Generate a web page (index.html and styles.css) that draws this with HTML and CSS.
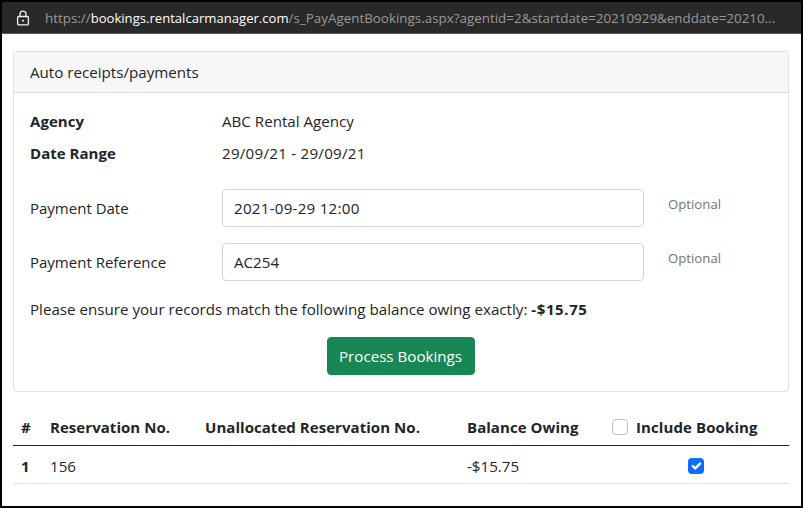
FILE: index.html
```html
<!DOCTYPE html>
<html lang="en">
<head>
<meta charset="utf-8">
<title>Auto receipts/payments</title>
<link rel="stylesheet" href="styles.css">
</head>
<body>
<div class="frame">
  <div class="urlbar">
    <svg class="lock" width="14" height="16" viewBox="0 0 14 16" aria-hidden="true">
      <path d="M4 6.5V4.2a3 3 0 0 1 6 0V6.5" fill="none" stroke="#f2f2f2" stroke-width="1.3"/>
      <rect x="1.6" y="6.5" width="10.8" height="8.4" rx="1.2" fill="none" stroke="#f2f2f2" stroke-width="1.3"/>
      <circle cx="7" cy="10.7" r="1" fill="#f2f2f2"/>
    </svg>
    <span class="url"><span class="dim">https://</span><span class="host">bookings.rentalcarmanager.com</span><span class="dim">/s_PayAgentBookings.aspx?agentid=2&amp;startdate=20210929&amp;enddate=20210...</span></span>
  </div>
  <main class="page">
    <section class="card">
      <header class="card-header">Auto receipts/payments</header>
      <div class="card-body">
        <div class="info-row"><strong class="label">Agency</strong><span>ABC Rental Agency</span></div>
        <div class="info-row"><strong class="label">Date Range</strong><span class="num">29/09/21 - 29/09/21</span></div>
        <div class="form-grid">
          <label class="field-label" for="pd">Payment Date</label>
          <input class="field num" id="pd" type="text" value="2021-09-29 12:00">
          <small class="hint">Optional</small>
          <label class="field-label" for="pr">Payment Reference</label>
          <input class="field" id="pr" type="text" value="AC254">
          <small class="hint">Optional</small>
        </div>
        <p class="notice">Please ensure your records match the following balance owing exactly: <strong class="amount">-$15.75</strong></p>
        <div class="actions"><button class="btn" type="button">Process Bookings</button></div>
      </div>
    </section>
    <table class="table">
      <colgroup>
        <col class="c1"><col class="c2"><col class="c3"><col class="c4"><col class="c5">
      </colgroup>
      <thead>
        <tr>
          <th>#</th>
          <th>Reservation No.</th>
          <th>Unallocated Reservation No.</th>
          <th>Balance Owing</th>
          <th><span class="include"><span class="check"></span>Include Booking</span></th>
        </tr>
      </thead>
      <tbody>
        <tr>
          <th>1</th>
          <td>156</td>
          <td></td>
          <td>-$15.75</td>
          <td class="center"><span class="check on"><svg width="16" height="16" viewBox="0 0 20 20" aria-hidden="true"><path d="M6 10l3 3 6-6" fill="none" stroke="#fff" stroke-width="3" stroke-linecap="round" stroke-linejoin="round"/></svg></span></td>
        </tr>
      </tbody>
    </table>
  </main>
</div>
</body>
</html>
```

FILE: styles.css
```css
* { box-sizing: border-box; }
html, body { margin: 0; height: 100%; }
body {
  font-family: "Open Sans", "Noto Sans", sans-serif;
  font-size: 15.15px;
  line-height: 24px;
  color: #212529;
  background: #000;
}
.frame {
  height: 508px;
  width: 803px;
  border: 2px solid #000;
  display: flex;
  flex-direction: column;
  background: #fff;
  overflow: hidden;
}
.urlbar {
  height: 32px;
  flex: none;
  background: #292929;
  border-bottom: 1px solid #555;
  display: flex;
  align-items: center;
  padding-left: 14px;
  gap: 15px;
  font-size: 13.4px;
  white-space: nowrap;
}
.lock { flex: none; }
.dim { color: #9a9a9a; }
.host { color: #fff; font-size: 13.1px; }
.page { padding: 17px 12px 0 11px; }
.card {
  border: 1px solid #dfdfdf;
  border-radius: 4px;
  height: 341px;
  overflow: hidden;
}
.card-header {
  height: 41px;
  padding: 8px 16px;
  background: #f7f7f7;
  border-bottom: 1px solid #dfdfdf;
}
.card-body { padding: 16px 16px 16px; }
.info-row {
  display: grid;
  grid-template-columns: 192px 1fr;
  height: 32px;
}
.label { font-weight: 700; font-size: 15px; letter-spacing: .03px; }
.num { letter-spacing: .25px; }
.amount { font-size: 15px; letter-spacing: .6px; }
.form-grid {
  display: grid;
  grid-template-columns: 192px 422px auto;
  row-gap: 16px;
  padding-top: 16px;
  align-items: center;
}
.field-label { display: block; font-size: 15px; }
.field {
  height: 38px;
  width: 422px;
  border: 1px solid #ced4da;
  border-radius: 4px;
  padding: 6px 11px;
  font-family: inherit;
  font-size: inherit;
  color: #212529;
  background: #fff;
}
.hint {
  font-size: 13.2px;
  color: #6c757d;
  padding-left: 24px;
  align-self: start;
  line-height: 30px;
}
.notice { margin: 16px 0 16px; }
.actions { display: flex; justify-content: center; padding-right: 1px; }
.btn {
  height: 38px;
  width: 148px;
  border: 1px solid #198754;
  border-radius: 4px;
  background: #198754;
  color: #fff;
  font: inherit;
  padding: 0;
}
.table {
  border-collapse: collapse;
  table-layout: fixed;
  width: 776px;
  margin-top: 14px;
}
.c1 { width: 29px; }
.c2 { width: 155px; }
.c3 { width: 262px; }
.c4 { width: 145px; }
.c5 { width: 185px; }
.table th, .table td {
  text-align: left;
  vertical-align: top;
  border-bottom: 1px solid #dee2e6;
}
.table th { font-size: 15px; font-weight: 700; letter-spacing: .05px; }
.table thead th {
  padding: 9px 8px 6px;
  border-bottom: 1px solid #212529;
}
.table tbody th, .table tbody td { padding: 8px 8px 5px; }
.table tbody .center { padding: 12px 9px 9px 8px; }
.include { display: flex; align-items: center; gap: 8px; white-space: nowrap; letter-spacing: .1px; }
.check {
  display: block;
  width: 16px;
  height: 16px;
  border: 1px solid #bfbfbf;
  border-radius: 4px;
  background: #fff;
  flex: none;
}
.check.on {
  background: #0d6efd;
  border: 0;
  margin: 0 auto;
}
.check svg { display: block; }
```
